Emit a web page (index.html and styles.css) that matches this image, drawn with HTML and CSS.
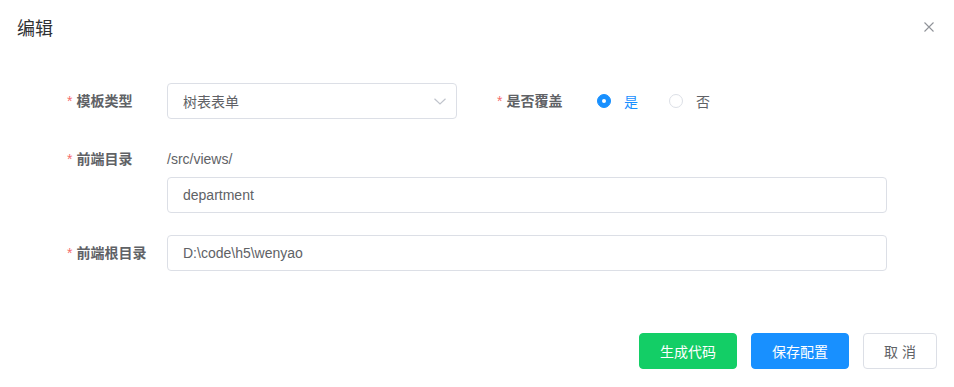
FILE: index.html
```html
<!DOCTYPE html>
<html lang="zh-CN">
<head>
	<meta charset="UTF-8">
	<meta name="viewport" content="width=device-width, initial-scale=1">
	<title>编辑</title>
	<link rel="stylesheet" href="styles.css">
</head>
<body>
	<div class="dialog">
		<div class="dialog__header">
			<span class="dialog__title">编辑</span>
			<button class="dialog__close" type="button" aria-label="Close">
				<svg width="10" height="10" viewBox="0 0 10 10"><path d="M0.5 0.5L9.5 9.5M9.5 0.5L0.5 9.5" stroke="#909399" stroke-width="1.1" fill="none"/></svg>
			</button>
		</div>

		<form class="form" name="main">
			<div class="form__row form__row--split">
				<div class="form__item">
					<label class="form__label is-required">模板类型</label>
					<div class="form__content">
						<div class="select">
							<input class="input select__input" type="text" readonly value="树表表单">
							<svg class="select__arrow" width="12" height="7" viewBox="0 0 12 7"><path d="M0.5 0.8L6 6L11.5 0.8" stroke="#c0c4cc" stroke-width="1.2" fill="none"/></svg>
						</div>
					</div>
				</div>
				<div class="form__item">
					<label class="form__label is-required">是否覆盖</label>
					<div class="form__content radios">
						<label class="radio is-checked"><span class="radio__dot"></span><span class="radio__text">是</span></label>
						<label class="radio"><span class="radio__dot"></span><span class="radio__text">否</span></label>
					</div>
				</div>
			</div>

			<div class="form__row">
				<div class="form__item">
					<label class="form__label is-required">前端目录</label>
					<div class="form__content">
						<div class="form__prefix">/src/views/</div>
						<input class="input" type="text" value="department">
					</div>
				</div>
			</div>

			<div class="form__row">
				<div class="form__item">
					<label class="form__label is-required">前端根目录</label>
					<div class="form__content">
						<input class="input" type="text" value="D:\code\h5\wenyao">
					</div>
				</div>
			</div>
		</form>

		<div class="dialog__footer">
			<button class="button button--success" type="button">生成代码</button>
			<button class="button button--primary" type="button">保存配置</button>
			<button class="button" type="button">取 消</button>
		</div>
	</div>
</body>
</html>
```

FILE: styles.css
```css
body {
	margin: 0;
	background: #fff;
	font-family: "Liberation Sans", "Noto Sans CJK SC", sans-serif;
	font-size: 14px;
	color: #606266;
}

.dialog {
	width: 954px;
	height: 387px;
	box-sizing: border-box;
	display: flex;
	flex-direction: column;
}

.dialog__header {
	display: flex;
	justify-content: space-between;
	align-items: flex-start;
	padding: 17px 20px 0 17px;
	height: 66px;
	box-sizing: border-box;
}
.dialog__title {
	font-size: 18px;
	line-height: 24px;
	color: #303133;
}
.dialog__close {
	border: none;
	background: none;
	padding: 0;
	margin-top: 5px;
	width: 10px;
	height: 10px;
	display: flex;
	cursor: pointer;
}

.form {
	padding: 17px 67px 0 67px;
}
.form__row {
	margin-bottom: 22px;
}
.form__row--split {
	display: grid;
	grid-template-columns: 430px 1fr;
}
.form__item {
	display: flex;
}
.form__label {
	width: 100px;
	flex-shrink: 0;
	line-height: 36px;
	font-weight: bold;
	color: #606266;
}
.form__label.is-required::before {
	content: "*";
	color: #f56c6c;
	margin-right: 4px;
	font-weight: normal;
}
.form__content {
	flex: 1;
}
.form__prefix {
	line-height: 36px;
}

.input {
	display: block;
	width: 100%;
	height: 36px;
	box-sizing: border-box;
	border: 1px solid #dcdfe6;
	border-radius: 4px;
	padding: 0 15px;
	font: inherit;
	color: #606266;
	outline: none;
	background: #fff;
}

.select {
	position: relative;
	width: 290px;
}
.select__input {
	padding-right: 30px;
	cursor: pointer;
}
.select__arrow {
	position: absolute;
	right: 11px;
	top: 15px;
}

.radios {
	display: flex;
	align-items: center;
	height: 36px;
}
.radio {
	display: flex;
	align-items: center;
	margin-right: 31px;
	cursor: pointer;
}
.radio__dot {
	width: 14px;
	height: 14px;
	box-sizing: border-box;
	border: 1px solid #dcdfe6;
	border-radius: 50%;
	background: #fff;
	position: relative;
}
.radio__text {
	padding-left: 13px;
}
.radio.is-checked .radio__dot {
	border-color: #1890ff;
	background: #1890ff;
}
.radio.is-checked .radio__dot::after {
	content: "";
	position: absolute;
	width: 4px;
	height: 4px;
	border-radius: 50%;
	background: #fff;
	left: 4px;
	top: 4px;
}
.radio.is-checked .radio__text {
	color: #1890ff;
}

.dialog__footer {
	margin-top: auto;
	display: flex;
	justify-content: flex-end;
	gap: 14px;
	padding: 0 17px 18px;
}

.button {
	height: 36px;
	box-sizing: border-box;
	padding: 0 20px;
	border: 1px solid #dcdfe6;
	border-radius: 4px;
	background: #fff;
	font: inherit;
	color: #606266;
	cursor: pointer;
}
.button--success { background: #13ce66; border-color: #13ce66; color: #fff; }
.button--primary { background: #1890ff; border-color: #1890ff; color: #fff; }
```
